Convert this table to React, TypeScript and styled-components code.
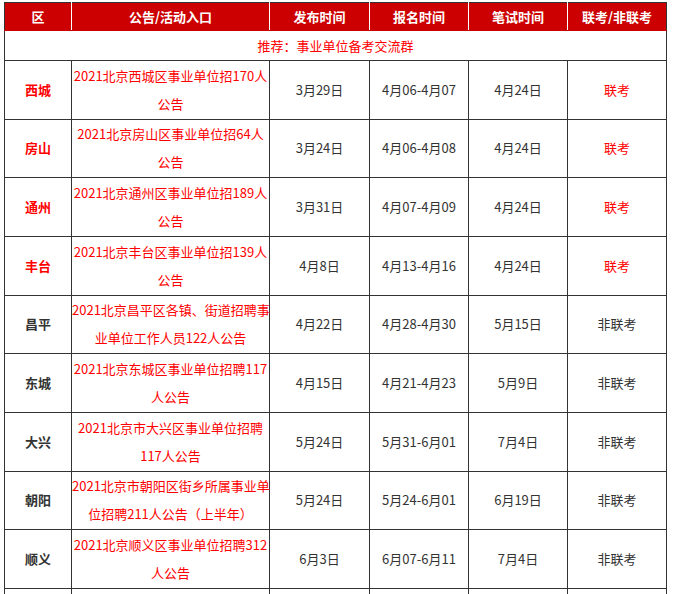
import React from "react";
import styled, { createGlobalStyle } from "styled-components";

const Global = createGlobalStyle`
  html, body { margin: 0; padding: 0; background: #fff; }
  body { font-family: "Microsoft YaHei", "Noto Sans CJK SC", "Noto Sans", sans-serif; }
`;

const Wrap = styled.div`
  padding: 2px 0 0 4px;
`;

const Table = styled.table`
  border-collapse: collapse;
  table-layout: fixed;
  width: 662px;
  font-size: 13px;
  color: #333;
`;

const HeadCell = styled.th<{ $first?: boolean; $last?: boolean }>`
  background: #cc0000;
  color: #fff;
  font-weight: bold;
  font-size: 13px;
  height: 27px;
  padding: 0;
  text-align: center;
  vertical-align: middle;
  border-top: 1px solid #333;
  border-bottom: 1px solid #cc0000;
  border-left: 1px solid ${(p) => (p.$first ? "#333" : "#fff")};
  border-right: 1px solid ${(p) => (p.$last ? "#333" : "#fff")};
`;

const NoticeCell = styled.td`
  color: #ff0000;
  text-align: center;
  height: 29px;
  padding: 0;
  border: 1px solid #333;
  border-top: 1px solid #cc0000;
`;

const Cell = styled.td<{ $red?: boolean; $bold?: boolean }>`
  border: 1px solid #333;
  text-align: center;
  vertical-align: middle;
  padding: 0;
  height: 57.67px;
  line-height: 28px;
  color: ${(p) => (p.$red ? "#ff0000" : "#333")};
  font-weight: ${(p) => (p.$bold ? "bold" : "normal")};
  white-space: nowrap;
  overflow: visible;
`;

const Link = styled.span`
  color: #ff0000;
`;

type Row = {
  area: string;
  red: boolean;
  title: [string, string];
  pub: string;
  reg: string;
  exam: string;
  joint: boolean;
};

const rows: Row[] = [
  { area: "西城", red: true, title: ["2021北京西城区事业单位招170人", "公告"], pub: "3月29日", reg: "4月06-4月07", exam: "4月24日", joint: true },
  { area: "房山", red: true, title: ["2021北京房山区事业单位招64人", "公告"], pub: "3月24日", reg: "4月06-4月08", exam: "4月24日", joint: true },
  { area: "通州", red: true, title: ["2021北京通州区事业单位招189人", "公告"], pub: "3月31日", reg: "4月07-4月09", exam: "4月24日", joint: true },
  { area: "丰台", red: true, title: ["2021北京丰台区事业单位招139人", "公告"], pub: "4月8日", reg: "4月13-4月16", exam: "4月24日", joint: true },
  { area: "昌平", red: false, title: ["2021北京昌平区各镇、街道招聘事", "业单位工作人员122人公告"], pub: "4月22日", reg: "4月28-4月30", exam: "5月15日", joint: false },
  { area: "东城", red: false, title: ["2021北京东城区事业单位招聘117", "人公告"], pub: "4月15日", reg: "4月21-4月23", exam: "5月9日", joint: false },
  { area: "大兴", red: false, title: ["2021北京市大兴区事业单位招聘", "117人公告"], pub: "5月24日", reg: "5月31-6月01", exam: "7月4日", joint: false },
  { area: "朝阳", red: false, title: ["2021北京市朝阳区街乡所属事业单", "位招聘211人公告（上半年）"], pub: "5月24日", reg: "5月24-6月01", exam: "6月19日", joint: false },
  { area: "顺义", red: false, title: ["2021北京顺义区事业单位招聘312", "人公告"], pub: "6月3日", reg: "6月07-6月11", exam: "7月4日", joint: false },
];

const heads = ["区", "公告/活动入口", "发布时间", "报名时间", "笔试时间", "联考/非联考"];
const widths = [67, 198, 100, 99, 99, 99];

export default function App() {
  return (
    <Wrap>
      <Global />
      <Table>
        <colgroup>
          {widths.map((w, i) => (
            <col key={i} style={{ width: w }} />
          ))}
        </colgroup>
        <thead>
          <tr>
            {heads.map((h, i) => (
              <HeadCell key={h} $first={i === 0} $last={i === heads.length - 1}>
                {h}
              </HeadCell>
            ))}
          </tr>
        </thead>
        <tbody>
          <tr>
            <NoticeCell colSpan={6}>推荐：事业单位备考交流群</NoticeCell>
          </tr>
          {rows.map((r) => (
            <tr key={r.area}>
              <Cell $red={r.red} $bold>{r.area}</Cell>
              <Cell>
                <Link>
                  {r.title[0]}
                  <br />
                  {r.title[1]}
                </Link>
              </Cell>
              <Cell>{r.pub}</Cell>
              <Cell>{r.reg}</Cell>
              <Cell>{r.exam}</Cell>
              <Cell $red={r.joint}>{r.joint ? "联考" : "非联考"}</Cell>
            </tr>
          ))}
          <tr>
            {widths.map((_, i) => (
              <Cell key={i} />
            ))}
          </tr>
        </tbody>
      </Table>
    </Wrap>
  );
}
